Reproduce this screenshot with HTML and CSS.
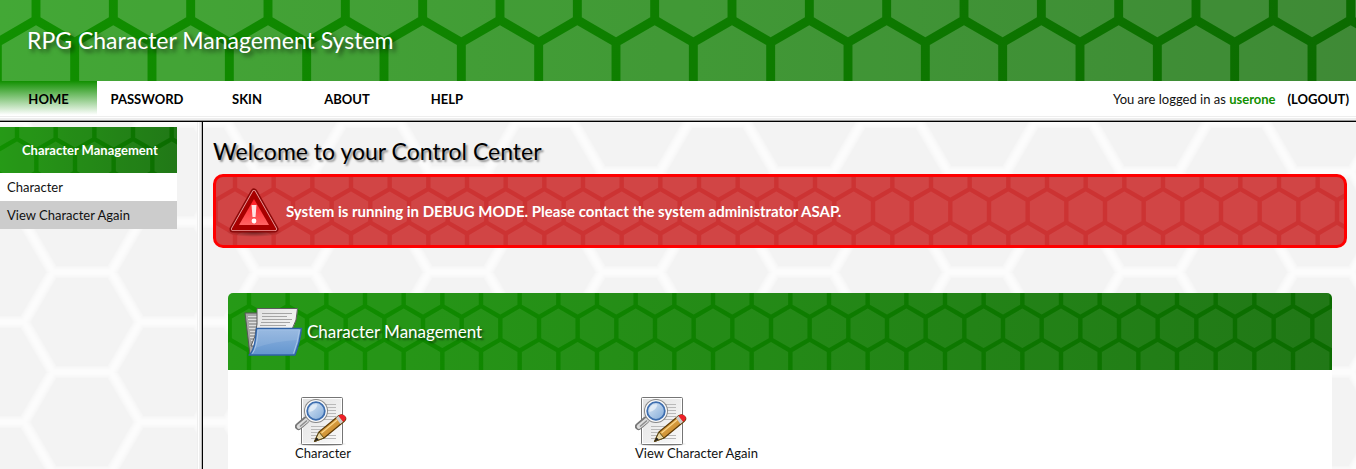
FILE: index.html
```html
<!DOCTYPE html>
<html lang="en">
<head>
<meta charset="utf-8">
<title>RPG Character Management System</title>
<link rel="stylesheet" href="styles.css">
</head>
<body>
<svg class="sprite" aria-hidden="true">
  <defs>
    <linearGradient id="paper" x1="0" y1="0" x2="1" y2="1"><stop offset="0" stop-color="#e0e0e0"/><stop offset="1" stop-color="#fbfbfb"/></linearGradient>
    <linearGradient id="folder" x1="0" y1="0" x2="0" y2="1"><stop offset="0" stop-color="#8fb3df"/><stop offset="1" stop-color="#6496cf"/></linearGradient>
    <linearGradient id="lens" x1="0" y1="0" x2="1" y2="1"><stop offset="0" stop-color="#dfeaf6"/><stop offset="1" stop-color="#7fa9d8"/></linearGradient>
    <linearGradient id="wood" x1="0" y1="0" x2="1" y2="1"><stop offset="0" stop-color="#efb95a"/><stop offset="1" stop-color="#b9781c"/></linearGradient>
    <linearGradient id="alert" x1="0" y1="0" x2="0" y2="1"><stop offset="0" stop-color="#ff1a22"/><stop offset="1" stop-color="#ff6464"/></linearGradient>
    <radialGradient id="shade"><stop offset="0" stop-color="#000" stop-opacity=".5"/><stop offset="1" stop-color="#000" stop-opacity="0"/></radialGradient>
  </defs>
  <symbol id="edit-find" viewBox="0 0 52 50">
    <ellipse cx="27" cy="48" rx="25" ry="3" fill="url(#shade)"/>
    <rect x="6.500" y="1.500" width="41" height="47" rx="1" fill="url(#paper)" stroke="#757575"/>
    <rect x="7.500" y="2.500" width="39" height="45" fill="none" stroke="#fff"/>
    <path d="M27 8.500h14M30 11.500h11M30 14.500h11M30 17.500h11M28 20.500h13M24 23.500h17M16 30.500h19M16 33.500h16M16 36.500h13M16 39.500h25M16 42.500h25" stroke="#b9b9b9"/>
    <path d="M11 24 3.500 30.500" stroke="#777" stroke-width="7" stroke-linecap="round"/>
    <path d="M12 24 4 30.500" stroke="#ddd" stroke-width="4.500" stroke-linecap="round"/>
    <path d="M12 24.500 5 30.500" stroke="#8c8c8c" stroke-width="1.500"/>
    <circle cx="21" cy="15" r="12" fill="#888"/>
    <circle cx="21" cy="15" r="11" fill="#fafafa"/>
    <circle cx="21" cy="15" r="8.800" fill="url(#lens)" stroke="#3e6eaf" stroke-width="1.800"/>
    <path d="M14.500 16a6.500 6.500 0 0 1 8-7.500q-1 6-8 7.500" fill="#fff" opacity=".5"/>
    <path d="M19.500 45.500 24 36 44 19.500q4-2 6 1.500 2 2-1 4.500L29 42z" fill="url(#wood)" stroke="#5d3a05" stroke-linejoin="round" stroke-width="1.200"/>
    <path d="M19.500 45.500 24 36l5 6z" fill="#ead9a8" stroke="#5d4a15" stroke-width="1"/>
    <path d="m19.500 45.500 2-4.300 2.300 2.300z" fill="#222"/>
    <path d="m41 22 4.500 6 2.500-2.200-4.500-6z" fill="#ccc"/>
    <path d="m43.500 20 4.700 5.700q4-2.700 2-5.200-2.800-3.500-6.700-.5" fill="#ed2029"/>
    <path d="m26.500 37 15.500-13" stroke="#fad58a" stroke-width="1.200"/>
  </symbol>
</svg>

<header class="banner"><h1>RPG Character Management System</h1></header>

<nav class="menu">
  <ul>
    <li><a class="current" href="#home">HOME</a></li>
    <li><a href="#password">PASSWORD</a></li>
    <li><a href="#skin">SKIN</a></li>
    <li><a href="#about">ABOUT</a></li>
    <li><a href="#help">HELP</a></li>
  </ul>
  <p class="session">You are logged in as <strong>userone</strong><a href="#logout">(LOGOUT)</a></p>
</nav>

<div class="page">
  <aside class="sidebar">
    <h2>Character Management</h2>
    <a href="#character">Character</a>
    <a class="active" href="#view">View Character Again</a>
  </aside>

  <main>
    <h2 class="welcome">Welcome to your Control Center</h2>

    <div class="notice" role="alert">
      <svg width="56" height="56" viewBox="0 0 56 56" aria-hidden="true">
        <ellipse cx="28" cy="49" rx="28" ry="5" fill="url(#shade)"/>
        <path d="M28 9 49 46H7z" fill="#a00" stroke="#8b0808" stroke-width="7" stroke-linejoin="round"/>
        <path d="M28 9 49 46H7z" fill="#a80000" stroke="#efa0a0" stroke-width="4" stroke-linejoin="round"/>
        <path d="M28 9 49 46H7z" fill="#a80000" stroke="#a80000" stroke-width="2.400" stroke-linejoin="round"/>
        <path d="M28 16 43 42H13z" fill="url(#alert)"/>
        <path d="M25.500 22h5l-1 12h-3z" fill="#fff" opacity=".85"/>
        <circle cx="28" cy="38" r="2.400" fill="#fff"/>
      </svg>
      <p>System is running in DEBUG MODE. Please contact the system administrator ASAP.</p>
    </div>

    <section class="panel">
      <header>
        <svg width="60" height="50" viewBox="0 0 60 50" aria-hidden="true">
          <path d="M1 6h18l-3 40-10 2z" fill="#a5a5a5" stroke="#555"/>
          <path d="M4 9.500h12M4 12.500h12M5 15.500h10M5 18.500h9M5 21.500h8M6 24.500h7M6 27.500h6M6 30.500h6M7 33.500h4" stroke="#ddd"/>
          <path d="M13 1.500h40.500q0 12-6 22L14 39H7q5-9 6-22z" fill="url(#paper)" stroke="#5c5c5c"/>
          <path d="M18 6.500h30M18 9.500h25M18 12.500h30M17 15.500h29M16 18.500h26" stroke="#a5a5a5"/>
          <path d="M5 48q6-4 7.500-26.500H57.500Q56 35 51 48z" fill="url(#folder)" stroke="#2f62a6" stroke-width="1.400" stroke-linejoin="round"/>
          <path d="M8.500 46.500q4.500-6 5.500-23.500h41.500q-2 13-6 23.500" fill="none" stroke="#a9c5e8"/>
          <path d="M14 24h41l-2 9q-22 1-42 8 2.500-7 3-17" fill="#fff" opacity=".1"/>
        </svg>
        <h3>Character Management</h3>
      </header>
      <div class="shortcuts">
        <a href="#character"><svg width="52" height="50" aria-hidden="true"><use href="#edit-find"/></svg>Character</a>
        <a href="#view"><svg width="52" height="50" aria-hidden="true"><use href="#edit-find"/></svg>View Character Again</a>
      </div>
    </section>
  </main>
</div>
</body>
</html>
```
FILE: styles.css
```css
:root {
  --comb: url("data:image/svg+xml,%3Csvg xmlns='http://www.w3.org/2000/svg' viewBox='0 0 232 134' width='232' height='134' fill='white' fill-opacity='.09'%3E%3Cdefs%3E%3Cpath id='h' d='M0-39.5 34.2-19.7V19.7L0 39.5-34.2 19.7V-19.7z'/%3E%3Cg id='r'%3E%3Cuse href='%23h'/%3E%3Cuse href='%23h' x='77.33'/%3E%3Cuse href='%23h' x='154.67'/%3E%3Cuse href='%23h' x='232'/%3E%3C/g%3E%3C/defs%3E%3Cuse href='%23r' y='44.65'/%3E%3Cuse href='%23r' x='38.67' y='111.65'/%3E%3Cuse href='%23r' x='38.67' y='-22.35'/%3E%3Cuse href='%23h' x='-38.67' y='111.65'/%3E%3Cuse href='%23h' x='-38.67' y='-22.35'/%3E%3C/svg%3E");
  --comb-strong: url("data:image/svg+xml,%3Csvg xmlns='http://www.w3.org/2000/svg' viewBox='0 0 232 134' width='232' height='134' fill='white' fill-opacity='.21'%3E%3Cdefs%3E%3Cpath id='h' d='M0-39.5 34.2-19.7V19.7L0 39.5-34.2 19.7V-19.7z'/%3E%3Cg id='r'%3E%3Cuse href='%23h'/%3E%3Cuse href='%23h' x='77.33'/%3E%3Cuse href='%23h' x='154.67'/%3E%3Cuse href='%23h' x='232'/%3E%3C/g%3E%3C/defs%3E%3Cuse href='%23r' y='44.65'/%3E%3Cuse href='%23r' x='38.67' y='111.65'/%3E%3Cuse href='%23r' x='38.67' y='-22.35'/%3E%3C/svg%3E");
  --paper: url("data:image/svg+xml,%3Csvg xmlns='http://www.w3.org/2000/svg' viewBox='0 0 173 100' width='173' height='100' fill='none' stroke='white' stroke-opacity='.22'%3E%3Cdefs%3E%3Cpath id='p' d='M-10 50H24L53 0H111L140 50H183M24 50 53 100H111L140 50M53 0 43-17M53 100 43 117M111 0 121-17M111 100 121 117'/%3E%3C/defs%3E%3Cuse href='%23p' stroke-width='12'/%3E%3Cuse href='%23p' stroke-width='10'/%3E%3Cuse href='%23p' stroke-width='8'/%3E%3Cuse href='%23p' stroke-width='6'/%3E%3Cuse href='%23p' stroke-width='4'/%3E%3Cuse href='%23p' stroke-width='2'/%3E%3C/svg%3E");
  --green: linear-gradient(to right, #119000, #0b6b00);
}

* { box-sizing: border-box; }

body {
  margin: 0;
  min-height: 100vh;
  display: flex;
  flex-direction: column;
  background: #f3f3f3;
  color: #111;
  font: 13px/20px Lato, "Open Sans", sans-serif;
}

h1, h2, h3, p, ul { margin: 0; padding: 0; }
a { color: inherit; text-decoration: none; }
svg { display: block; flex: none; }
.sprite { position: absolute; width: 0; height: 0; }

.banner {
  padding: 24px 27px 25px;
  background: var(--comb-strong) 36px 20px, var(--green);
}
.banner h1 {
  color: #fff;
  font-size: 23px;
  font-weight: 400;
  line-height: 32px;
  text-shadow: 3px 3px 4px rgba(0, 0, 0, .6);
}

.menu {
  display: flex;
  justify-content: space-between;
  background: #fff;
  border-bottom: 1px solid #000;
  box-shadow: inset 0 -1px #999, inset 0 -3px #eee, inset 0 -4px #fff, inset 0 -5px #eee;
  padding-bottom: 6px;
}
.menu ul { display: flex; list-style: none; }
.menu li a {
  display: block;
  width: 100px;
  padding: 8px 0 6px;
  text-align: center;
  color: #000;
  font-weight: 700;
}
.menu li:first-child a { width: 97px; }
.menu .current { background: linear-gradient(#119000, #fff); }
.session { padding: 8px 7px 0; }
.session strong { color: #119000; }
.session a { margin-left: 12px; color: #000; font-weight: 700; }

.page { flex: 1; display: flex; }
.sidebar {
  width: 203px;
  flex: none;
  padding: 5px 25px 0 0;
  border-right: 1px solid #000;
  box-shadow: inset -1px 0 #bbb, inset -3px 0 #eee, inset -4px 0 #fff, inset -5px 0 #eee;
  background: var(--paper) 0 50px;
}
.sidebar h2 {
  padding: 13px 16px 13px 22px;
  background: var(--comb) 17px 12px / 116px 67px, var(--green);
  color: #fff;
  font-size: 13px;
  line-height: 20px;
  white-space: nowrap;
}
.sidebar a { display: block; padding: 4px 7px; background: #fff; }
.sidebar .active { background: #ccc; }

main {
  flex: 1;
  min-width: 0;
  padding: 14px 9px 0 10px;
  background: var(--paper) 0 50px;
}
.welcome {
  color: #000;
  font-size: 23px;
  font-weight: 400;
  line-height: 30px;
  text-shadow: 2px 2px 2px rgba(0, 0, 0, .4);
}
.notice {
  display: flex;
  align-items: center;
  gap: 4px;
  margin-top: 8px;
  padding: 6px 10px;
  border: 3px solid red;
  border-radius: 10px;
  background: var(--comb) 19px 12px / 116px 67px #c33;
  color: #fff;
  font-size: 15px;
  font-weight: 700;
}
.panel {
  margin: 45px 15px 0;
  border-radius: 5px 5px 0 0;
  overflow: hidden;
  background: #fff;
}
.panel header {
  display: flex;
  align-items: center;
  gap: 3px;
  padding: 14px 16px 13px;
  background: var(--comb) 21px 13px / 116px 67px, var(--green);
}
.panel h3 {
  color: #fff;
  font-size: 17px;
  font-weight: 400;
  text-shadow: 2px 2px 2px rgba(0, 0, 0, .5);
}
.shortcuts {
  display: grid;
  grid-template-columns: repeat(auto-fill, minmax(300px, 1fr));
  column-gap: 16px;
  padding: 26px 33px 20px 67px;
}
.shortcuts a { line-height: 14px; }
```
